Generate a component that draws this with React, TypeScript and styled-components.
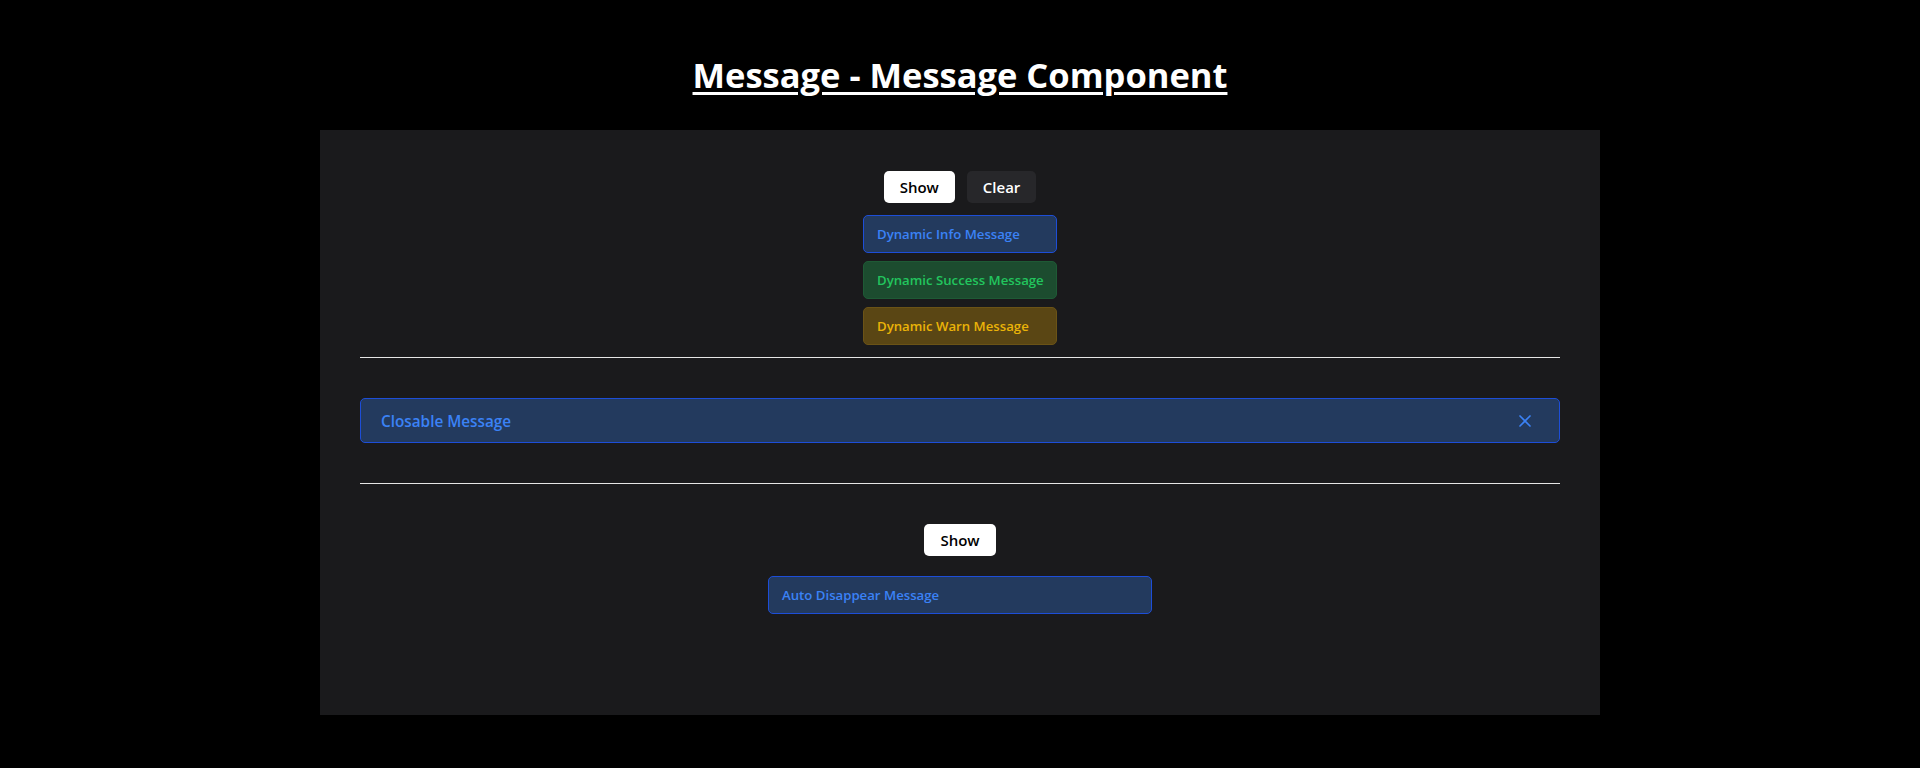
import React, { useState } from 'react';
import styled, { createGlobalStyle } from 'styled-components';

const GlobalStyle = createGlobalStyle`
  html, body {
    margin: 0;
    padding: 0;
    background: #000;
  }
  body {
    font-family: 'Open Sans', 'Noto Sans', sans-serif;
    color: #fff;
  }
`;

type Tone = 'info' | 'success' | 'warn';

const tones: Record<Tone, { bg: string; border: string; text: string }> = {
  info: { bg: '#233a5e', border: '#1d4ed8', text: '#3b82f6' },
  success: { bg: '#1c4c2f', border: '#1e5a35', text: '#22c55e' },
  warn: { bg: '#5a4614', border: '#6b5316', text: '#eab308' },
};

const Page = styled.main`
  min-height: 768px;
  padding-top: 55px;
  box-sizing: border-box;
`;

const Title = styled.h1`
  margin: 0 0 35px;
  text-align: center;
  font-size: 34.5px;
  line-height: 40px;
  font-weight: 700;
  text-decoration: underline;
  text-underline-offset: 4px;
  text-decoration-thickness: 3px;
`;

const Panel = styled.section`
  width: 1280px;
  margin: 0 auto;
  padding: 41px 40px 101px;
  box-sizing: border-box;
  background: #1a1a1c;
`;

const Stack = styled.div<{ $gap: number }>`
  display: flex;
  flex-direction: column;
  align-items: center;
  gap: ${(p) => p.$gap}px;
`;

const ButtonRow = styled.div`
  display: flex;
  gap: 12px;
`;

const Button = styled.button<{ $variant?: 'light' | 'dark' }>`
  height: 32px;
  padding: 0 16px;
  border: none;
  border-radius: 5px;
  font-family: inherit;
  font-size: 15px;
  font-weight: 600;
  cursor: pointer;
  background: ${(p) => (p.$variant === 'dark' ? '#27272a' : '#ffffff')};
  color: ${(p) => (p.$variant === 'dark' ? '#ffffff' : '#000000')};
`;

const MessageList = styled.div`
  display: flex;
  flex-direction: column;
  gap: 8px;
`;

const Message = styled.div<{ $tone: Tone; $width?: number; $size?: 'sm' | 'lg' }>`
  display: flex;
  align-items: center;
  justify-content: space-between;
  box-sizing: border-box;
  width: ${(p) => (p.$width ? `${p.$width}px` : '100%')};
  height: ${(p) => (p.$size === 'lg' ? 45 : 38)}px;
  padding: ${(p) => (p.$size === 'lg' ? '0 24px 0 20px' : '0 12px 0 13px')};
  border: 1px solid ${(p) => tones[p.$tone].border};
  border-radius: 5px;
  background: ${(p) => tones[p.$tone].bg};
  color: ${(p) => tones[p.$tone].text};
  font-size: ${(p) => (p.$size === 'lg' ? 15.3 : 13.2)}px;
  font-weight: 600;
  white-space: nowrap;
`;

const CloseButton = styled.button`
  display: flex;
  align-items: center;
  justify-content: center;
  padding: 0;
  border: none;
  background: none;
  color: #3b82f6;
  cursor: pointer;
`;

const Divider = styled.hr`
  margin: 0;
  border: none;
  border-top: 1px solid #e5e5e5;
`;

const Section = styled.div<{ $top?: number; $bottom?: number }>`
  margin-top: ${(p) => p.$top ?? 0}px;
  margin-bottom: ${(p) => p.$bottom ?? 0}px;
`;

const CloseIcon = () => (
  <svg width="20" height="20" viewBox="0 0 24 24" fill="none" stroke="currentColor" strokeWidth="2" strokeLinecap="round">
    <path d="M18 6 6 18" />
    <path d="m6 6 12 12" />
  </svg>
);

const dynamic: { tone: Tone; text: string }[] = [
  { tone: 'info', text: 'Dynamic Info Message' },
  { tone: 'success', text: 'Dynamic Success Message' },
  { tone: 'warn', text: 'Dynamic Warn Message' },
];

export default function App() {
  const [items, setItems] = useState(dynamic);
  const [closed, setClosed] = useState(false);
  const [auto, setAuto] = useState(true);

  return (
    <Page>
      <GlobalStyle />
      <Title>Message - Message Component</Title>
      <Panel>
        <Stack $gap={12}>
          <ButtonRow>
            <Button onClick={() => setItems(dynamic)}>Show</Button>
            <Button $variant="dark" onClick={() => setItems([])}>
              Clear
            </Button>
          </ButtonRow>
          <MessageList>
            {items.map((m) => (
              <Message key={m.text} $tone={m.tone} $width={194}>
                {m.text}
              </Message>
            ))}
          </MessageList>
        </Stack>
        <Section $top={12}>
          <Divider />
        </Section>
        <Section $top={40} $bottom={40}>
          {!closed && (
            <Message $tone="info" $size="lg">
              <span>Closable Message</span>
              <CloseButton onClick={() => setClosed(true)} aria-label="close">
                <CloseIcon />
              </CloseButton>
            </Message>
          )}
        </Section>
        <Divider />
        <Section $top={40}>
          <Stack $gap={20}>
            <Button onClick={() => setAuto(true)}>Show</Button>
            {auto && (
              <Message $tone="info" $width={384}>
                Auto Disappear Message
              </Message>
            )}
          </Stack>
        </Section>
      </Panel>
    </Page>
  );
}
